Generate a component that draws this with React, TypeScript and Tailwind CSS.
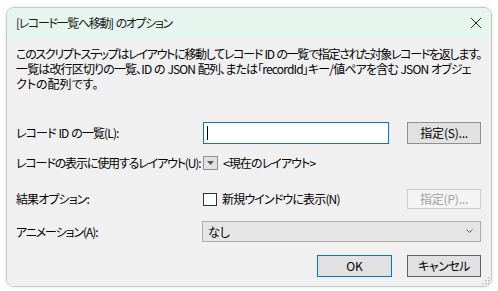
import React from "react";

const font = "font-['Noto_Sans_CJK_JP',sans-serif] [font-feature-settings:'palt']";

export default function App() {
  return (
    <div className={`w-[498px] h-[291px] bg-white pt-[7px] pl-[6px] ${font} text-[12px] text-black`}>
      <div className="w-[486px] h-[280px] rounded-[8px] border border-[#c4c8c6] overflow-hidden flex flex-col shadow-[0_0_4px_rgba(0,0,0,0.12)]">
        {/* Title bar */}
        <div className="h-[30px] shrink-0 bg-[#e6f5ee] flex items-center justify-between pl-[9px] pr-[8px]">
          <span className="leading-none text-[#1a1a1a] tracking-[-1.35px] [word-spacing:1.5px]">[レコード一覧へ移動] のオプション</span>
          <svg width="12" height="12" viewBox="0 0 12 12" className="mr-[1px]">
            <path d="M1 1 L11 11 M11 1 L1 11" stroke="#222" strokeWidth="1" />
          </svg>
        </div>
        {/* Body */}
        <div className="flex-1 bg-[#f0f0f0] pl-[9px] pr-[10px] pt-[8px] flex flex-col relative">
          <div className="leading-[15px] whitespace-nowrap">
            <div className="tracking-[-1.3px] [word-spacing:1.2px]">
              このスクリプトステップはレイアウトに移動してレコード ID の一覧で指定された対象レコードを返します。
            </div>
            <div className="tracking-[-0.85px] [word-spacing:0.8px]">
              一覧は改行区切りの一覧、ID の JSON 配列、または「recordId」キー/値ペアを含む JSON オブジェ
            </div>
            <div>クトの配列です。</div>
          </div>

          {/* Row 1 */}
          <div className="mt-[31px] h-[22px] flex items-center">
            <div className="w-[187px] shrink-0 tracking-[-0.9px] [word-spacing:1px]">レコード ID の一覧(L):</div>
            <div className="w-[187px] h-[22px] bg-white border border-[#0078d7] flex items-center pl-[3px]">
              <div className="w-px h-[14px] bg-black" />
            </div>
            <button className="ml-[18px] w-[74px] h-[22px] bg-[#e1e1e1] border border-[#8f8f8f] flex items-center justify-center leading-none tracking-[-0.2px]">
              指定(S)...
            </button>
          </div>

          {/* Row 2 */}
          <div className="mt-[10px] h-[18px] flex items-center">
            <div className="w-[187px] shrink-0 whitespace-nowrap tracking-[-1.15px]">レコードの表示に使用するレイアウト(U):</div>
            <div className="w-[15px] h-[14px] bg-[#e1e1e1] border border-[#8f8f8f] flex items-center justify-center">
              <svg width="7" height="4" viewBox="0 0 7 4">
                <path d="M0 0 L7 0 L3.5 4 Z" fill="#555" />
              </svg>
            </div>
            <span className="ml-[5px] tracking-[-0.9px]">&lt;現在のレイアウト&gt;</span>
          </div>

          {/* Row 3 */}
          <div className="mt-[17px] h-[20px] flex items-center">
            <div className="w-[187px] shrink-0 tracking-[-0.9px]">結果オプション:</div>
            <div className="w-[14px] h-[13px] bg-white border border-[#333]" />
            <span className="ml-[5px] tracking-[-0.85px]">新規ウインドウに表示(N)</span>
            <button className="ml-auto w-[74px] h-[20px] bg-[#f4f4f4] border border-[#cccccc] text-[#a0a0a0] flex items-center justify-center leading-none tracking-[-0.2px]">
              指定(P)...
            </button>
          </div>

          {/* Row 4 */}
          <div className="mt-[12px] h-[21px] flex items-center">
            <div className="w-[186px] shrink-0 tracking-[-1.1px]">アニメーション(A):</div>
            <div className="flex-1 h-[21px] bg-[#e5e5e5] border border-[#adadad] flex items-center justify-between pl-[5px] pr-[7px]">
              <span>なし</span>
              <svg width="7" height="5" viewBox="0 0 7 5">
                <path d="M0.5 0.5 L3.5 3.5 L6.5 0.5" stroke="#555" strokeWidth="1" fill="none" />
              </svg>
            </div>
          </div>

          {/* Buttons */}
          <div className="mt-[13px] h-[22px] flex justify-end gap-[15px]">
            <button className="w-[75px] h-[22px] bg-[#e1e1e1] border border-[#0078d7] flex items-center justify-center leading-none">
              OK
            </button>
            <button className="w-[74px] h-[22px] bg-[#e1e1e1] border border-[#5f5f5f] flex items-center justify-center leading-none tracking-[-0.5px]">
              キャンセル
            </button>
          </div>

          {/* Size grip */}
          <svg width="10" height="10" viewBox="0 0 10 10" className="absolute right-[1px] bottom-[1px]">
            {[
              [8, 2],
              [8, 5],
              [5, 5],
              [8, 8],
              [5, 8],
              [2, 8],
            ].map(([x, y], i) => (
              <rect key={i} x={x} y={y} width="1.5" height="1.5" fill="#b8b8b8" />
            ))}
          </svg>
        </div>
      </div>
    </div>
  );
}
